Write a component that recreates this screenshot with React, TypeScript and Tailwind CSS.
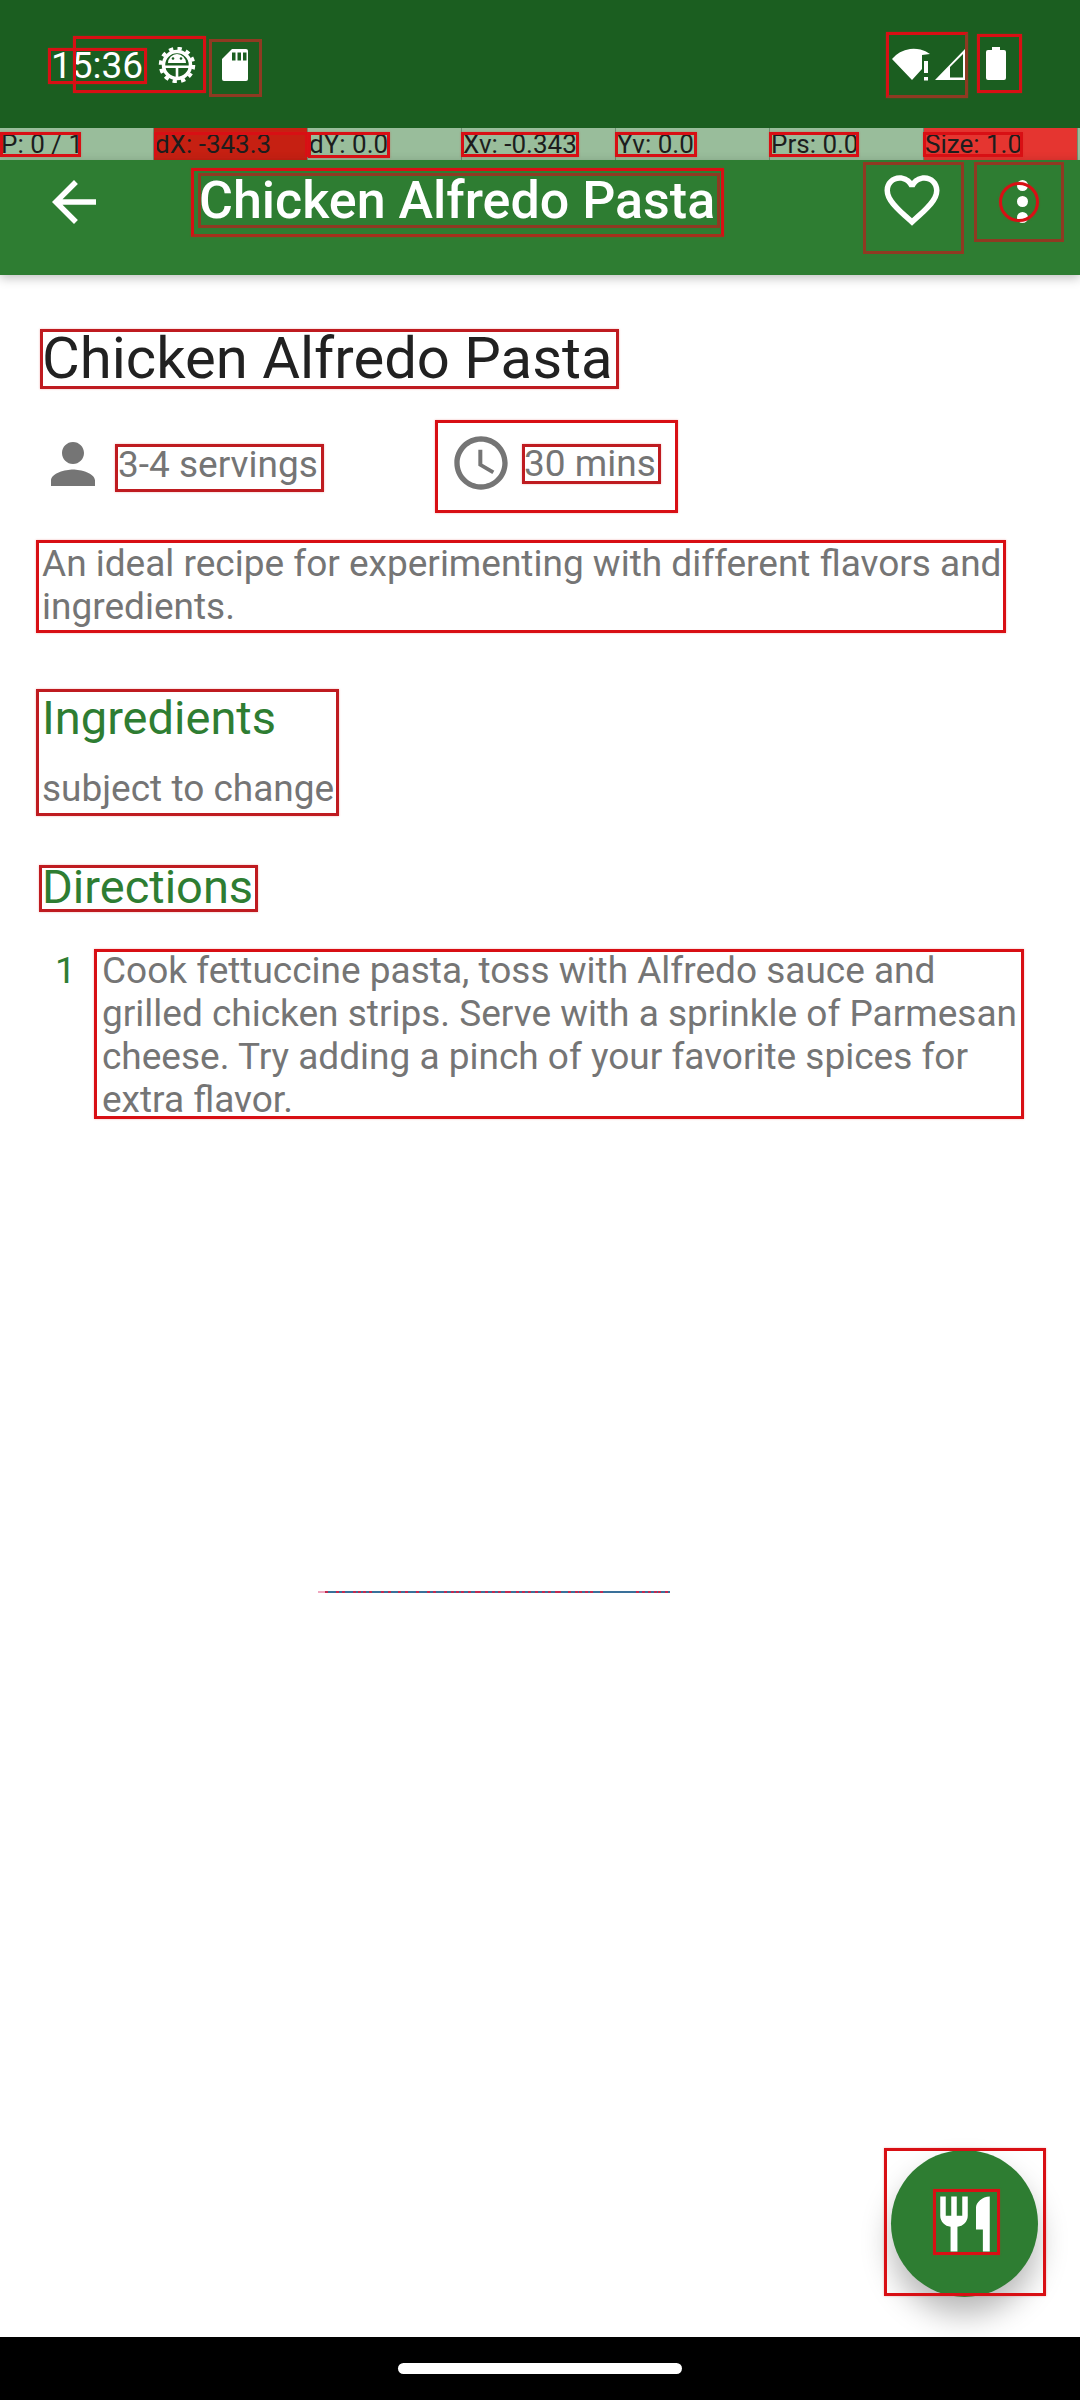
const pointerCells = [
  { label: 'P: 0 / 1', bg: '' },
  { label: 'dX: -343.3', bg: 'bg-[#c62012]' },
  { label: 'dY: 0.0', bg: '' },
  { label: 'Xv: -0.343', bg: '' },
  { label: 'Yv: 0.0', bg: '' },
  { label: 'Prs: 0.0', bg: '' },
  { label: 'Size: 1.0', bg: 'bg-[#e53530]' }
]

// layout bounds overlay, same as the debug option on the device
const bright = 'absolute border-[3px] border-[#d80f14] shadow-[0_0_2px_rgba(220,40,40,0.35)]'
const muted = 'absolute border-[3px] border-[#bf1b20] shadow-[0_0_2px_rgba(220,40,40,0.35)]'
const dark = 'absolute border-[3px] border-[#8f3a22]'
const bounds = [
  `${bright} left-[48px] top-[48px] w-[99px] h-[36px]`,
  `${bright} left-[73px] top-[36px] w-[133px] h-[57px]`,
  `${dark} left-[209px] top-[39px] w-[53px] h-[58px]`,
  `${bright} border-b-[#8f3a22] border-r-[#8f3a22] left-[886px] top-[32px] w-[82px] h-[66px]`,
  `${bright} left-[977px] top-[34px] w-[45px] h-[59px]`,
  `${bright} left-0 top-[132px] w-[81px] h-[25px]`,
  `${bright} border-b-0 left-[154px] top-[132px] w-[154px] h-[25px]`,
  `${bright} left-[308px] top-[132px] w-[82px] h-[26px]`,
  `${bright} left-[461px] top-[132px] w-[118px] h-[25px]`,
  `${bright} left-[615px] top-[132px] w-[82px] h-[25px]`,
  `${bright} left-[769px] top-[132px] w-[90px] h-[25px]`,
  `${bright} left-[923px] top-[132px] w-[100px] h-[25px]`,
  `${bright} border-b-[#a5301c] left-[191px] top-[168px] w-[533px] h-[69px]`,
  `${dark} left-[198px] top-[173px] w-[522px] h-[55px]`,
  `${dark} left-[863px] top-[162px] w-[101px] h-[92px]`,
  `${dark} left-[974px] top-[162px] w-[90px] h-[80px]`,
  `${bright} rounded-full left-[999px] top-[182px] w-[40px] h-[40px]`,
  `${muted} left-[40px] top-[329px] w-[579px] h-[60px]`,
  `${muted} left-[115px] top-[444px] w-[209px] h-[48px]`,
  `${bright} left-[435px] top-[420px] w-[243px] h-[93px]`,
  `${muted} left-[522px] top-[444px] w-[139px] h-[40px]`,
  `${bright} left-[36px] top-[540px] w-[970px] h-[93px]`,
  `${muted} left-[36px] top-[689px] w-[303px] h-[127px]`,
  `${muted} left-[39px] top-[865px] w-[219px] h-[47px]`,
  `${bright} left-[94px] top-[949px] w-[930px] h-[170px]`,
  `${bright} left-[884px] top-[2148px] w-[162px] h-[148px]`,
  `${bright} left-[933px] top-[2189px] w-[67px] h-[66px]`
]

const sliverDots = [
  7, 18, 24, 35, 40, 45, 51, 63, 70, 80, 87, 98, 109, 115, 126, 133, 138, 143, 150, 157, 160, 167, 174, 180,
  187, 190, 198, 204, 210, 217, 224, 230, 237, 240, 250, 257, 261, 267, 272, 282, 318, 324, 330, 336, 340, 347
]

function Sliver() {
  return (
    <svg width="352" height="3" className="block">
      <rect x="0" y="0" width="7" height="2" fill="#f0a8c0" />
      <rect x="7" y="0" width="345" height="2" fill="#3a7099" />
      {sliverDots.map(x => (
        <rect key={x} x={x} y="0" width="3" height="2" fill="#c22a50" />
      ))}
    </svg>
  )
}

function MaterialIcon({ d, className }: { d: string; className: string }) {
  return (
    <svg viewBox="0 0 24 24" fill="currentColor" className={className}>
      <path d={d} />
    </svg>
  )
}

function DebugGear() {
  return (
    <svg width="38" height="36" viewBox="0 0 38 36" className="shrink-0">
      <circle cx="19" cy="18" r="13.500" fill="none" stroke="white" strokeWidth="3.500" />
      <circle cx="19" cy="18" r="16.500" fill="none" stroke="white" strokeWidth="3.500" strokeDasharray="4.320 4.320" />
      <path d="M10 16a9 9 0 0 1 18 0Z" fill="white" />
      <rect x="7" y="18.500" width="24" height="2.500" fill="white" />
      <rect x="17.700" y="21" width="2.600" height="10" fill="white" />
      <circle cx="15" cy="11.500" r="1.300" fill="#1b5e20" />
      <circle cx="23" cy="11.500" r="1.300" fill="#1b5e20" />
    </svg>
  )
}

function SdCard() {
  return (
    <svg width="26" height="32" viewBox="0 0 26 32" className="shrink-0">
      <path d="M10 0H24a2 2 0 0 1 2 2V30a2 2 0 0 1-2 2H2a2 2 0 0 1-2-2V10Z" fill="white" />
      <rect x="10" y="3.500" width="3.500" height="8" fill="#1b5e20" />
      <rect x="15.500" y="3.500" width="3.500" height="8" fill="#1b5e20" />
      <rect x="21" y="3.500" width="3.500" height="8" fill="#1b5e20" />
    </svg>
  )
}

function WifiSignal() {
  return (
    <svg width="74" height="34" viewBox="0 0 74 34" className="shrink-0">
      <path d="M20 33 L0 12 A28 28 0 0 1 38 7 L30 8 V22 Z" fill="white" />
      <rect x="32" y="14" width="4" height="12" fill="white" />
      <rect x="32" y="30" width="4" height="3.500" fill="white" />
      <path fillRule="evenodd" d="M43 33 L73 2 V33 Z M58 30.500 H71 V7 L58 20 Z" fill="white" />
    </svg>
  )
}

function Battery() {
  return (
    <svg width="20" height="33" viewBox="0 0 20 33" className="shrink-0">
      <path
        d="M6 0H14V3H18a2 2 0 0 1 2 2V31a2 2 0 0 1-2 2H2a2 2 0 0 1-2-2V5a2 2 0 0 1 2-2H6Z"
        fill="white"
      />
    </svg>
  )
}

export default function App() {
  return (
    <div className="relative flex h-[2400px] w-[1080px] flex-col overflow-hidden bg-white font-['Roboto',sans-serif]">
      <div className="flex h-[128px] shrink-0 items-start bg-[#1b5e20] text-white">
        <div className="ml-[51px] mt-[44px] flex items-start">
          <span className="text-[37px] leading-[43px]">15:36</span>
          <span className="ml-[15px] mt-[3px]">
            <DebugGear />
          </span>
          <span className="ml-[26px] mt-[5px]">
            <SdCard />
          </span>
        </div>
        <div className="ml-auto mr-[74px] mt-[47px] flex items-start gap-[20px]">
          <WifiSignal />
          <Battery />
        </div>
      </div>

      <div className="z-10 flex h-[32px] shrink-0 bg-[#99bd9b]">
        {pointerCells.map(c => (
          <div
            key={c.label}
            className={`h-full w-[154px] shrink-0 border-r border-r-[#6f8f72] pl-[1px] text-[26px] leading-[32px] text-[#1d1d1d] ${c.bg}`}
          >
            {c.label}
          </div>
        ))}
      </div>

      <div className="z-10 flex h-[115px] shrink-0 items-start bg-[#2e7d32] text-white shadow-[0_3px_10px_rgba(0,0,0,0.25)]">
        <MaterialIcon
          className="ml-[41px] mt-[9px] size-[66px] shrink-0"
          d="M20 11H7.830l5.590-5.590L12 4l-8 8 8 8 1.410-1.410L7.830 13H20v-2z"
        />
        <span className="ml-[92px] mt-[9px] text-[52px] font-medium leading-[64px] whitespace-nowrap">
          Chicken Alfredo Pasta
        </span>
        <MaterialIcon
          className="ml-auto mt-[7px] size-[66px] shrink-0"
          d="M16.500 3c-1.740 0-3.410.810-4.500 2.090C10.910 3.810 9.240 3 7.500 3 4.420 3 2 5.420 2 8.500c0 3.780 3.400 6.860 8.550 11.540L12 21.350l1.450-1.320C18.600 15.360 22 12.280 22 8.500 22 5.420 19.580 3 16.500 3zm-4.400 15.550l-.1.1-.1-.1C7.140 14.240 4 11.390 4 8.500 4 6.500 5.500 5 7.500 5c1.540 0 3.040.990 3.570 2.360h1.870C13.460 5.990 14.960 5 16.500 5c2 0 3.500 1.500 3.500 3.500 0 2.890-3.140 5.740-7.900 10.050z"
        />
        <div className="ml-[72px] mr-[52px] mt-[20px] flex w-[11px] shrink-0 flex-col gap-[5px]">
          <span className="size-[11px] rounded-full bg-white" />
          <span className="size-[11px] rounded-full bg-white" />
          <span className="size-[11px] rounded-full bg-white" />
        </div>
      </div>

      <main className="flex-1">
        <h1 className="ml-[42px] mt-[51px] text-[58px] leading-[64px] text-[#212121]">Chicken Alfredo Pasta</h1>

        <div className="mt-[41px] flex h-[66px] items-center text-[#757575]">
          <MaterialIcon
            className="ml-[40px] size-[66px] shrink-0"
            d="M12 12c2.210 0 4-1.790 4-4s-1.790-4-4-4-4 1.790-4 4 1.790 4 4 4zm0 2c-2.670 0-8 1.340-8 4v2h16v-2c0-2.660-5.330-4-8-4z"
          />
          <span className="ml-[12px] mt-[1px] w-[331px] text-[37px]">3-4 servings</span>
        </div>

        <p className="ml-[42px] mr-[50px] mt-[45px] text-[37px] leading-[43px] text-[#757575]">
          An ideal recipe for experimenting with different flavors and ingredients.
        </p>

        <h2 className="ml-[42px] mt-[62px] text-[47px] leading-[56px] text-[#2e7d32]">Ingredients</h2>
        <p className="ml-[42px] mt-[21px] text-[37px] leading-[43px] text-[#757575]">subject to change</p>

        <h2 className="ml-[42px] mt-[49px] text-[47px] leading-[56px] text-[#2e7d32]">Directions</h2>

        <div className="ml-[55px] mt-[34px] flex items-start">
          <span className="w-[47px] text-[37px] leading-[43px] text-[#2e7d32]">1</span>
          <p className="w-[920px] text-[37px] leading-[43px] text-[#757575]">
            Cook fettuccine pasta, toss with Alfredo sauce and grilled chicken strips. Serve with a sprinkle of
            Parmesan cheese. Try adding a pinch of your favorite spices for extra flavor.
          </p>
        </div>

        <div className="ml-[318px] mt-[470px]">
          <Sliver />
        </div>
      </main>

      {/* clock + time sits on its own column in the app */}
      <div className="absolute left-[449px] top-[430px] flex h-[66px] items-center text-[#757575]">
        <MaterialIcon
          className="size-[64px] shrink-0"
          d="M11.990 2C6.470 2 2 6.480 2 12s4.470 10 9.990 10C17.520 22 22 17.520 22 12S17.520 2 11.990 2zM12 20c-4.420 0-8-3.580-8-8s3.580-8 8-8 8 3.580 8 8-3.580 8-8 8zm.5-13H11v6l5.250 3.150.75-1.230-4.500-2.670z"
        />
        <span className="ml-[11px] mt-[2px] text-[37px]">30 mins</span>
      </div>

      <button className="absolute left-[891px] top-[2150px] flex size-[147px] items-center justify-center rounded-full bg-[#2e7d32] text-white shadow-[0_18px_30px_rgba(0,0,0,0.28)]">
        <MaterialIcon
          className="size-[66px]"
          d="M11 9H9V2H7v7H5V2H3v7c0 2.120 1.660 3.840 3.750 3.970V22h2.500v-9.030C11.340 12.840 13 11.120 13 9V2h-2v7zm5-3v8h2.500v8H21V2c-2.760 0-5 2.240-5 4z"
        />
      </button>

      <div className="flex h-[63px] shrink-0 items-center justify-center bg-black">
        <div className="h-[11px] w-[284px] rounded-full bg-white" />
      </div>

      <div className="pointer-events-none absolute inset-0 z-20">
        {bounds.map(b => (
          <div key={b} className={b} />
        ))}
      </div>
    </div>
  )
}
